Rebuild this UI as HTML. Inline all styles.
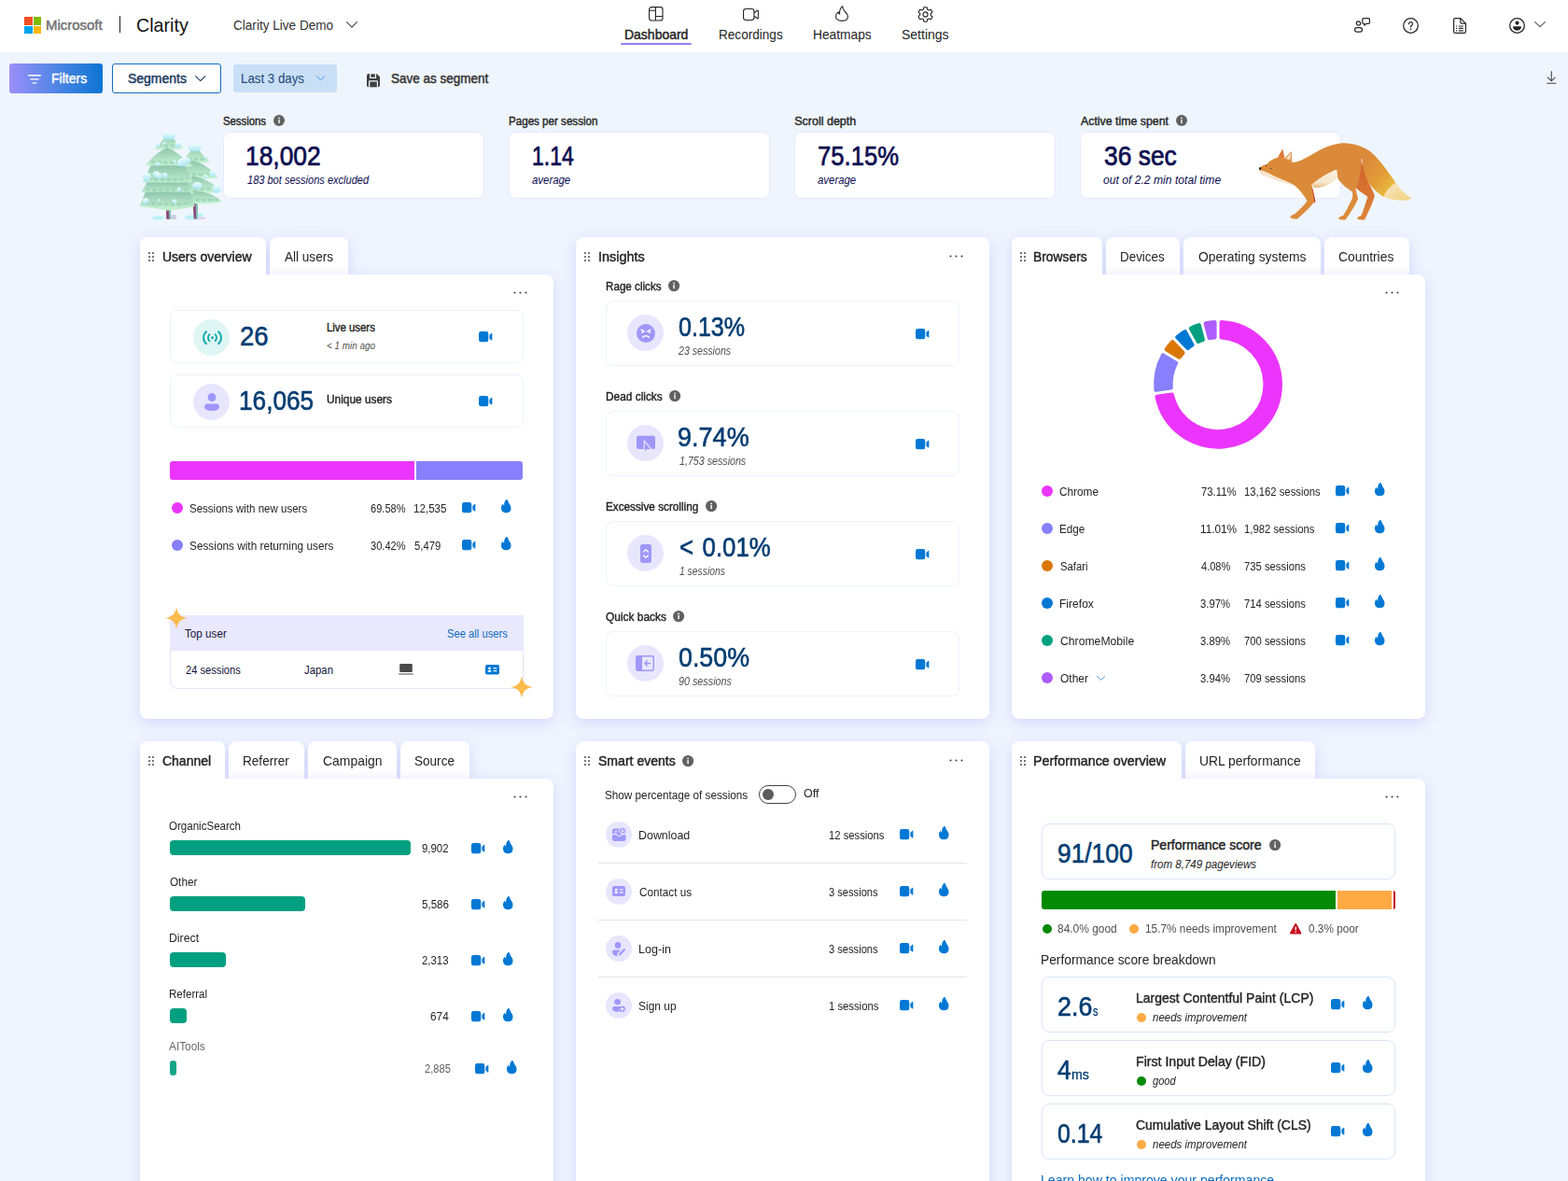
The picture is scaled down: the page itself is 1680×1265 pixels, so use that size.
<!DOCTYPE html>
<html lang="en"><head><meta charset="utf-8"><title>Clarity Live Demo - Dashboard</title>
<style>
html,body{margin:0;padding:0}
body{width:1680px;height:1265px;overflow:hidden;position:relative;background:#eff5fd;font-family:"Liberation Sans",sans-serif;color:#242424}
div,span,svg,a,h1,h2,h3,p,button,header,nav,section,ul,li{position:absolute;box-sizing:border-box;margin:0;padding:0}
.t{white-space:nowrap;transform-origin:0 0;line-height:20px;font-weight:400;text-decoration:none}
.i{overflow:visible}
header{left:0;top:0;width:1680px;height:56px;background:#fff}
.card{background:#fff;border-radius:8px;box-shadow:0 4px 16px rgba(100,100,255,.2)}
.shw{left:0;top:0;filter:drop-shadow(0 4px 8px rgba(100,100,255,.2))}
.cardb{background:#fff;border-radius:0 8px 8px 8px}
.tab{background:#fff;border-radius:8px 8px 0 0}
.tabi{background:linear-gradient(#fff 78%,#f3f3fe);border-radius:8px 8px 0 0}
.bx{border:1px solid #edf2fc;border-radius:8px;background:#fff}
.circ{border-radius:50%}
.dot{border-radius:50%}
.sep{height:1px;background:#e3e3e3}
</style></head>
<body>
<svg width="0" height="0" style="position:absolute"><defs>
<symbol id="cam" viewBox="0 0 14.600 11.400" preserveAspectRatio="none"><path fill="currentColor" d="M0 2.400A2.400 2.400 0 0 1 2.400 0h5.500a2.400 2.400 0 0 1 2.400 2.400v6.600a2.400 2.400 0 0 1-2.400 2.400H2.400A2.400 2.400 0 0 1 0 9ZM11.400 3.900l2-1.900c.5-.4 1.200-.1 1.200.5v6.400c0 .6-.7.900-1.200.5l-2-1.900Z"/></symbol>
<symbol id="flame" viewBox="0 0 10.700 14.400" preserveAspectRatio="none"><path fill="currentColor" d="M6 0c.8 0 1 .8 1.200 1.500.6 1.800 1.600 3.100 2.400 4.400.7 1.100 1.100 2.100 1.100 3.300 0 3-2.300 5.200-5.350 5.200S0 12.200 0 9.200c0-1.600.5-3 1.300-4 .3-.3.700-.2.800.2.200.6.600 1 1.100 1.100C3 4.600 3.300 2.600 4.600.9 5 .4 5.500 0 6 0Z"/></symbol>
<symbol id="info" viewBox="0 0 12 12"><circle cx="6" cy="6" r="6" fill="#616161"/><circle cx="6" cy="3.400" r=".85" fill="#fff"/><rect x="5.300" y="5" width="1.400" height="4.200" rx=".5" fill="#fff"/></symbol>
<symbol id="drag" viewBox="0 0 6 10"><g fill="#616161"><rect x="0" y="0" width="2" height="2" rx=".4"/><rect x="4" y="0" width="2" height="2" rx=".4"/><rect x="0" y="4" width="2" height="2" rx=".4"/><rect x="4" y="4" width="2" height="2" rx=".4"/><rect x="0" y="8" width="2" height="2" rx=".4"/><rect x="4" y="8" width="2" height="2" rx=".4"/></g></symbol>
<symbol id="more" viewBox="0 0 15 3"><g fill="#424242"><circle cx="1.500" cy="1.500" r="1.050"/><circle cx="7.500" cy="1.500" r="1.050"/><circle cx="13.500" cy="1.500" r="1.050"/></g></symbol>
<symbol id="chev" viewBox="0 0 12 7" preserveAspectRatio="none"><path d="M.6.700 6 6.100 11.400.700" fill="none" stroke="currentColor" stroke-width="1.100" stroke-linecap="round" stroke-linejoin="round"/></symbol>
<symbol id="spark" viewBox="0 0 24 24"><path fill="#fdba4d" d="M12 0c1 7.400 4.600 11 12 12-7.400 1-11 4.600-12 12-1-7.400-4.600-11-12-12C7.400 11 11 7.400 12 0Z"/></symbol>
</defs></svg>
<header><div style="left:26px;top:18px;width:8.5px;height:8.5px;background:#f25022"></div><div style="left:35.500px;top:18px;width:8.500px;height:8.500px;background:#7fba00"></div><div style="left:26px;top:27.500px;width:8.500px;height:8.500px;background:#00a4ef"></div><div style="left:35.500px;top:27.500px;width:8.500px;height:8.500px;background:#ffb900"></div><span class="t" style="left:49.01px;top:17px;font-size:15.3px;transform:scaleX(0.9770);color:#737373;-webkit-text-stroke:0.5px #737373;">Microsoft</span><div style="left:128px;top:17px;width:1px;height:18px;background:#1b1b1b"></div><span class="t" style="left:145.80px;top:17px;font-size:20.3px;transform:scaleX(0.9710);color:#111;">Clarity</span><span class="t" style="left:250.08px;top:16.5px;font-size:14.5px;transform:scaleX(0.9360);color:#323130;">Clarity Live Demo</span><svg class="i" style="left:371px;top:23px;width:12px;height:7px;color:#424242;"><use href="#chev"/></svg><nav style="left:0;top:0"><svg class="i" style="left:695.300px;top:7.200px;width:15.600px;height:15.600px" viewBox="0 0 16 16"><g fill="none" stroke="#242424" stroke-width="1.150"><rect x=".6" y=".6" width="14.800" height="14.800" rx="2.600"/><path d="M7.600.600v14.800M.6 4.400h7M7.600 10.800h7.800"/></g></svg><span class="t" style="left:669.46px;top:27px;font-size:14.5px;transform:scaleX(0.9640);color:#242424;-webkit-text-stroke:0.45px #242424;">Dashboard</span><div style="left:665px;top:46px;width:76px;height:1.600px;border-radius:1px;background:#8d83fa"></div><svg class="i" style="left:796px;top:9px;width:17px;height:13px" viewBox="0 0 17 13"><g fill="none" stroke="#242424" stroke-width="1.100" stroke-linejoin="round"><rect x=".55" y=".55" width="11.400" height="11.900" rx="2.600"/><path d="M12 4.800 15.400 2.300c.4-.3 1 0 1 .5v7.400c0 .5-.6.800-1 .5L12 8.200"/></g></svg><span class="t" style="left:769.78px;top:27px;font-size:14.5px;transform:scaleX(0.9370);color:#242424;">Recordings</span><svg class="i" style="left:895px;top:6px;width:14px;height:17px" viewBox="0 0 14 17"><path fill="none" stroke="#242424" stroke-width="1.100" stroke-linejoin="round" d="M7.800.600c-.3 2.300.6 3.700 2 5.200 1.600 1.700 3.600 3.300 3.600 6 0 2.900-2.600 4.600-6.300 4.600S.6 14.600.6 11.700c0-2 1-3.700 2.500-4.800.2 1.100.7 1.900 1.600 2.200C4.200 5.900 5.200 2.700 7.800.6Z"/></svg><span class="t" style="left:871.31px;top:27px;font-size:14.5px;transform:scaleX(0.9490);color:#242424;">Heatmaps</span><svg class="i" style="left:981.800px;top:5.600px;width:19px;height:19px" viewBox="0 0 20 20"><g fill="none" stroke="#242424" stroke-width="1.200" stroke-linejoin="round"><path d="M8.300 1.200h3.400l.5 2.500 1.600.9 2.400-.8 1.700 2.900-1.900 1.700v1.900l1.900 1.700-1.700 2.900-2.400-.8-1.600.9-.5 2.500H8.300l-.5-2.500-1.600-.9-2.400.8-1.700-2.900L4 9.500V8.400L2.100 6.700l1.700-2.900 2.400.8 1.600-.9Z" transform="translate(0 .6)"/><circle cx="10" cy="10" r="2.700"/></g></svg><span class="t" style="left:966.39px;top:27px;font-size:14.5px;transform:scaleX(0.9650);color:#242424;">Settings</span></nav><svg class="i" style="left:1451.200px;top:19.200px;width:17px;height:16px" viewBox="0 0 17 16"><g fill="none" stroke="#242424" stroke-width="1.200" stroke-linejoin="round"><circle cx="4.500" cy="6" r="2.200"/><rect x=".6" y="10.600" width="7.800" height="4.600" rx="2.200"/><path d="M10 .600h5.200c.7 0 1.200.5 1.200 1.200v3.400c0 .7-.5 1.200-1.200 1.200h-2.400l-2 1.800V6.400h-.8c-.7 0-1.200-.5-1.200-1.200V1.800C8.800 1.100 9.300.6 10 .6Z"/></g></svg><svg class="i" style="left:1503.100px;top:19.200px;width:17px;height:17px" viewBox="0 0 17 17"><circle cx="8.500" cy="8.500" r="7.800" fill="none" stroke="#242424" stroke-width="1.200"/><path d="M6.500 6.700c0-1.200.9-2 2-2s2 .8 2 1.900c0 1.600-2 1.700-2 3.400" fill="none" stroke="#242424" stroke-width="1.200" stroke-linecap="round"/><circle cx="8.500" cy="12.300" r=".85" fill="#242424"/></svg><svg class="i" style="left:1556.800px;top:19.200px;width:14px;height:17px" viewBox="0 0 14 17"><g fill="none" stroke="#242424" stroke-width="1.200" stroke-linejoin="round"><path d="M2.200.600h5.600l5.600 5.600v8.600c0 .9-.7 1.600-1.600 1.600H2.200c-.9 0-1.600-.7-1.600-1.600V2.200C.6 1.300 1.300.6 2.200.6Z"/><path d="M7.800.600v4c0 .9.700 1.600 1.600 1.600h4"/></g><g stroke="#242424" stroke-width="1.200"><path d="M5.800 9h5M5.800 11.400h5M5.800 13.800h5"/><path d="M3 9h1.200M3 11.400h1.200M3 13.800h1.200"/></g></svg><svg class="i" style="left:1617.200px;top:19.200px;width:17px;height:17px" viewBox="0 0 17 17"><circle cx="8.500" cy="8.500" r="7.800" fill="none" stroke="#242424" stroke-width="1.300"/><circle cx="8.500" cy="5.600" r="2.100" fill="#242424"/><path d="M4 9.200h9c0 2.800-1.900 4.600-4.500 4.600S4 12 4 9.200Z" fill="#242424"/></svg><svg class="i" style="left:1644px;top:23px;width:12px;height:6.5px;color:#555;"><use href="#chev"/></svg></header><div style="left:0;top:0"><button style="left:10px;top:68px;width:99.600px;height:32px;border:0;border-radius:3px;background:linear-gradient(90deg,#9b8ff9,#4f86e4 50%,#0b74d3)"></button><svg class="i" style="left:30px;top:79.500px;width:14px;height:10px" viewBox="0 0 14 10"><path d="M.7.700h12.600M2.900 4.900h8.200M5.200 8.900h3.600" stroke="#fff" stroke-width="1.400" stroke-linecap="round"/></svg><span class="t" style="left:55.40px;top:74px;font-size:14.5px;transform:scaleX(0.9690);color:#fff;-webkit-text-stroke:0.45px #fff;">Filters</span><button style="left:120px;top:68px;width:117px;height:32px;border:1px solid #0f6cbd;border-radius:3px;background:#fff"></button><span class="t" style="left:137.48px;top:74px;font-size:14.5px;transform:scaleX(0.9630);color:#17375e;-webkit-text-stroke:0.45px #17375e;">Segments</span><svg class="i" style="left:208.5px;top:80.5px;width:11.5px;height:6.5px;color:#17375e;"><use href="#chev"/></svg><button style="left:250px;top:69px;width:111px;height:30px;border:0;border-radius:3px;background:#c8dff6"></button><span class="t" style="left:257.50px;top:74px;font-size:14.5px;transform:scaleX(0.9170);color:#1d4777;">Last 3 days</span><svg class="i" style="left:339px;top:80.8px;width:9.2px;height:5.5px;color:#2f8ad8;"><use href="#chev"/></svg><svg class="i" style="left:393px;top:78.900px;width:14px;height:14.300px" viewBox="0 0 14 14.300"><path d="M2 0h8.600L14 3.200v9.100a2 2 0 0 1-2 2H2a2 2 0 0 1-2-2V2a2 2 0 0 1 2-2Z" fill="#404040"/><path d="M3-.2h7.100V4a1 1 0 0 1-1 1H4a1 1 0 0 1-1-1ZM2 14.500V8.200a1 1 0 0 1 1-1h8a1 1 0 0 1 1 1v6.300Z" fill="#eff5fd"/><path d="M4.300.3h4.500v3.400H4.300ZM3.300 8.500h7.500v5.800H3.300Z" fill="#404040"/></svg><span class="t" style="left:418.88px;top:74px;font-size:14.5px;transform:scaleX(0.9310);color:#323130;-webkit-text-stroke:0.45px #323130;">Save as segment</span><svg class="i" style="left:1656.900px;top:76px;width:10.500px;height:14px" viewBox="0 0 10.500 14"><path d="M5.250.3v10.400M1 6.600l4.250 4.200L9.500 6.600M.2 13.300h10.100" fill="none" stroke="#424242" stroke-width="1.100"/></svg></div><section style="left:0;top:0"><span class="t" style="left:239.18px;top:120px;font-size:12.5px;transform:scaleX(0.9050);color:#242424;-webkit-text-stroke:0.4px #242424;">Sessions</span><svg class="i" style="left:293px;top:123px;width:12px;height:12px;"><use href="#info"/></svg><div style="left:239px;top:141px;width:280px;height:72px;background:#fff;border:1px solid #e9e9fc;border-radius:8px"></div><span class="t" style="left:263.13px;top:157px;font-size:29px;transform:scaleX(0.9090);color:#0c0c50;-webkit-text-stroke:0.7px #0c0c50;">18,002</span><span class="t" style="left:265.30px;top:183px;font-size:12.5px;transform:scaleX(0.8830);color:#0c0c50;font-style:italic;">183 bot sessions excluded</span><span class="t" style="left:545.34px;top:120px;font-size:12.5px;transform:scaleX(0.9280);color:#242424;-webkit-text-stroke:0.4px #242424;">Pages per session</span><div style="left:545px;top:141px;width:280px;height:72px;background:#fff;border:1px solid #e9e9fc;border-radius:8px"></div><span class="t" style="left:570.25px;top:157px;font-size:29px;transform:scaleX(0.7930);color:#0c0c50;-webkit-text-stroke:0.7px #0c0c50;">1.14</span><span class="t" style="left:570.24px;top:183px;font-size:12.5px;transform:scaleX(0.9120);color:#0c0c50;font-style:italic;">average</span><span class="t" style="left:851.22px;top:120px;font-size:12.5px;color:#242424;-webkit-text-stroke:0.4px #242424;">Scroll depth</span><div style="left:851px;top:141px;width:280px;height:72px;background:#fff;border:1px solid #e9e9fc;border-radius:8px"></div><span class="t" style="left:875.84px;top:157px;font-size:29px;transform:scaleX(0.8850);color:#0c0c50;-webkit-text-stroke:0.7px #0c0c50;">75.15%</span><span class="t" style="left:876.24px;top:183px;font-size:12.5px;transform:scaleX(0.9120);color:#0c0c50;font-style:italic;">average</span><span class="t" style="left:1157.75px;top:120px;font-size:12.5px;transform:scaleX(0.9880);color:#242424;-webkit-text-stroke:0.4px #242424;">Active time spent</span><svg class="i" style="left:1260px;top:123px;width:12px;height:12px;"><use href="#info"/></svg><div style="left:1157px;top:141px;width:280px;height:72px;background:#fff;border:1px solid #e9e9fc;border-radius:8px"></div><span class="t" style="left:1182.73px;top:157px;font-size:29px;transform:scaleX(0.9100);color:#0c0c50;-webkit-text-stroke:0.7px #0c0c50;">36 sec</span><span class="t" style="left:1182.17px;top:183px;font-size:12.5px;transform:scaleX(0.9710);color:#0c0c50;font-style:italic;">out of 2.2 min total time</span></section>
<div style="left:0;top:0"><svg class="i" style="left:140px;top:135px;width:110px;height:110px" viewBox="0 0 1265 1265">
<defs><linearGradient id="tg" x1="0" y1="0" x2="0" y2="1"><stop offset="0" stop-color="#8fc6ae"/><stop offset=".5" stop-color="#acdec1"/><stop offset="1" stop-color="#c8f4d3"/></linearGradient>
<linearGradient id="sg" x1="0" y1="0" x2="0" y2="1"><stop offset="0" stop-color="#f2fdfe"/><stop offset="1" stop-color="#a6e6f5"/></linearGradient></defs>
<g fill="#b9f1f7"><ellipse cx="340" cy="1130" rx="75" ry="24"/><ellipse cx="780" cy="1125" rx="115" ry="30"/><ellipse cx="850" cy="1095" rx="40" ry="22"/></g><ellipse cx="875" cy="1135" rx="50" ry="14" fill="#e6cdea"/>
<path d="M765 930h62l-8 215h-40Z" fill="#8a4a7c"/><path d="M800 930h28l-8 215h-12Z" fill="#7fc8b8"/>
<g fill="url(#tg)"><path d="M790 245C850 315 925 390 975 440 885 470 700 460 620 440 680 380 740 310 790 245Z"/><path d="M760 425c120 20 245 115 315 210-120 28-375 18-475-12 40-80 100-155 160-198Z"/><path d="M760 615c140 20 285 105 358 195-110 22-315 22-498-8Z"/><path d="M760 795c140 0 295 55 370 140-125 28-330 28-480 8Z"/></g>
<g fill="none" stroke="#8ccbb2" stroke-opacity=".55" stroke-width="34" stroke-dasharray="52 26"><path d="M700 400c90 12 170 10 240 2"/><path d="M680 585c120 18 260 15 350 2"/><path d="M700 765c120 18 280 15 370 0"/><path d="M720 905c120 14 260 12 360 0"/></g>
<g fill="url(#sg)"><ellipse cx="790" cy="266" rx="84" ry="48"/><circle cx="920" cy="382" r="24"/><circle cx="1010" cy="585" r="38"/><circle cx="925" cy="622" r="26"/><circle cx="1062" cy="772" r="52"/><ellipse cx="820" cy="735" rx="58" ry="44"/></g>
<path d="M437 1020h60l-6 128h-52Z" fill="#8a4a7c"/><path d="M470 1020h28l-6 128h-16Z" fill="#7fc8b8"/><ellipse cx="530" cy="1120" rx="36" ry="30" fill="#c8d0e4"/>
<g fill="url(#tg)"><path d="M470 95c50 60 132 132 172 175-80 30-262 30-352 15 50-58 120-128 180-190Z"/><path d="M450 268c90 20 172 112 322 227-120 15-442 5-587-15 65-80 145-162 265-212Z"/><path d="M250 485h412l110 205c-170 10-272 62-352 52-100-20-192-30-272-52Z"/><path d="M200 695h502l80 135c-180 22-482 12-647-15Z"/><path d="M180 815h552l60 175c-90 10-192 52-362 52-130-40-232-40-317-57Z"/></g>
<g fill="none" stroke="#8ccbb2" stroke-opacity=".55" stroke-width="34" stroke-dasharray="52 26"><path d="M330 235c90 12 190 10 270 0"/><path d="M250 440c130 16 340 14 460 2"/><path d="M210 645c130 22 360 22 500-2"/><path d="M190 780c150 18 400 18 540 0"/><path d="M180 945c150 26 400 28 560 0"/></g>
<g fill="url(#sg)"><ellipse cx="470" cy="120" rx="84" ry="48"/><circle cx="340" cy="230" r="28"/><circle cx="585" cy="226" r="38"/><ellipse cx="655" cy="438" rx="86" ry="52" transform="rotate(-22 655 438)"/><circle cx="200" cy="625" r="50"/><circle cx="312" cy="592" r="38"/><circle cx="420" cy="608" r="34"/><circle cx="345" cy="612" r="36"/><circle cx="335" cy="470" r="24"/><circle cx="185" cy="925" r="38"/><circle cx="598" cy="780" r="24"/><circle cx="542" cy="930" r="28"/><circle cx="540" cy="436" r="18"/><circle cx="415" cy="212" r="16"/><circle cx="348" cy="915" r="16"/></g>
</svg><svg class="i" style="left:1340px;top:140px;width:180px;height:105px" viewBox="0 0 1680 980">
<defs><linearGradient id="ft" gradientUnits="userSpaceOnUse" x1="1150" y1="300" x2="1450" y2="560"><stop offset="0" stop-color="#dc8a3a"/><stop offset=".55" stop-color="#e29c38"/><stop offset="1" stop-color="#e9c03e"/></linearGradient>
<linearGradient id="fw" x1="0" y1="0" x2="1" y2="1"><stop offset="0" stop-color="#f9e6c6"/><stop offset="1" stop-color="#f1d27c"/></linearGradient>
<linearGradient id="fb" x1="0" y1="0" x2="0" y2="1"><stop offset="0" stop-color="#f9efdf"/><stop offset=".7" stop-color="#f6e6cc"/><stop offset="1" stop-color="#e9b780"/></linearGradient>
<linearGradient id="fl" x1="0" y1="0" x2="0" y2="1"><stop offset="0" stop-color="#d2602b"/><stop offset=".6" stop-color="#da7632"/><stop offset="1" stop-color="#dd8537"/></linearGradient></defs>
<path d="M1110 165C1210 190 1300 300 1450 520L1330 660C1260 625 1180 540 1120 430Z" fill="url(#ft)"/>
<path d="M1450 520C1500 590 1560 650 1612 680 1540 712 1420 700 1330 660 1350 600 1400 550 1450 520Z" fill="url(#fw)"/>
<path d="M1105 290C1125 400 1160 490 1200 560 1215 590 1230 620 1240 650 1220 720 1180 810 1140 888 1120 895 1075 892 1065 878 1068 865 1085 855 1105 850 1125 800 1150 730 1170 660 1140 640 1090 610 1050 570 1080 500 1100 400 1105 290Z" fill="url(#fl)"/>
<path d="M85 378C95 355 130 345 160 335 190 300 230 275 270 268L340 272 412 315C470 320 520 290 600 245 700 185 790 140 900 126 1010 118 1110 150 1200 215 1150 245 1115 268 1105 290 1108 400 1085 500 1050 572 1000 580 900 540 870 470 865 440 862 410 860 390 780 420 680 480 610 540L640 700C640 720 560 800 470 880 440 885 410 880 395 865 400 850 420 835 440 832 490 790 540 740 565 700 530 640 490 590 440 545 330 510 200 470 120 440 95 420 85 400 85 378Z" fill="#db8a3a"/>
<path d="M870 470C900 540 1000 600 1015 610 1025 640 1020 670 1010 690 980 750 950 810 925 850 900 855 880 865 878 878 885 892 930 895 950 888 1000 820 1050 740 1075 680 1060 640 1055 600 1050 572Z" fill="#dc8b3b"/>
<path d="M270 268 320 180l20 92Z" fill="#e0793a"/><path d="M340 275 408 205l4 110Z" fill="#dd8d3e"/><path d="M352 280 402 222l-6 70Z" fill="#f6e2c4"/>
<path d="M90 395c40 5 90 25 140 55 70 30 150 60 210 95-90-15-240-65-320-105-20-15-28-30-30-45Z" fill="#f7e6cf"/>
<path d="M610 540c70-60 170-120 250-150 2 30 5 55 10 80-70 70-170 110-240 100Z" fill="url(#fb)"/>
<path d="M618 575c12 40 22 90 30 135l-10 15c-6-50-16-100-28-150Z" fill="#c8412a"/>
<circle cx="95" cy="377" r="11" fill="#111"/><circle cx="155" cy="348" r="5.500" fill="#222"/><ellipse cx="205" cy="378" rx="8" ry="4.500" fill="#222"/>
</svg></div>
<section style="left:0;top:0"><div class="shw"><div class="cardb" style="left:150px;top:294px;width:443px;height:476px"></div><div class="tab" style="left:150px;top:254px;width:135px;height:40px"></div><div class="tabi" style="left:289px;top:254px;width:84px;height:40px"></div></div><svg class="i" style="left:159px;top:270px;width:6px;height:10px;"><use href="#drag"/></svg><span class="t" style="left:173.89px;top:265px;font-size:14.5px;transform:scaleX(0.9640);color:#242424;-webkit-text-stroke:0.45px #242424;">Users overview</span><span class="t" style="left:305.43px;top:265px;font-size:14.5px;transform:scaleX(0.9350);color:#242424;">All users</span><svg class="i" style="left:550.1px;top:311.6px;width:15px;height:3px;"><use href="#more"/></svg><div class="bx" style="left:182px;top:332px;width:378.500px;height:57px"></div><div class="circ" style="left:207px;top:341.500px;width:39px;height:39px;background:#dff6f4"></div><svg class="i" style="left:216.500px;top:353.700px;width:21px;height:15.400px" viewBox="0 0 21 15.400"><g fill="none" stroke="#10a9a9" stroke-width="1.900" stroke-linecap="round"><path d="M4 1.200C.1 4.700.1 10.700 4 14.200M17 1.200c3.900 3.500 3.900 9.500 0 13M7.400 4.200c-1.900 1.900-1.900 5.100 0 7M13.600 4.200c1.900 1.900 1.900 5.100 0 7"/></g><circle cx="10.500" cy="7.700" r="1.500" fill="#10a9a9"/></svg><span class="t" style="left:257.09px;top:350px;font-size:29px;transform:scaleX(0.9480);color:#023c72;-webkit-text-stroke:0.6px #023c72;">26</span><span class="t" style="left:349.89px;top:341px;font-size:12.5px;transform:scaleX(0.9100);color:#242424;-webkit-text-stroke:0.4px #242424;">Live users</span><span class="t" style="left:349.91px;top:360px;font-size:10.5px;transform:scaleX(0.9440);color:#505050;font-style:italic;">&lt; 1 min ago</span><svg class="i" style="left:513.4px;top:355px;width:14.6px;height:11.4px;color:#0078d4;"><use href="#cam"/></svg><div class="bx" style="left:182px;top:401px;width:378.500px;height:57px"></div><div class="circ" style="left:207px;top:410.500px;width:39px;height:39px;background:#e8e6fd"></div><svg class="i" style="left:218.500px;top:421px;width:16px;height:19px" viewBox="0 0 16 19"><circle cx="8" cy="4.600" r="4.500" fill="#9f97fa"/><path d="M3.200 11.500h9.600c1.800 0 3.200 1.400 3.200 3.200 0 2.600-3 4.300-8 4.300s-8-1.700-8-4.300c0-1.800 1.400-3.200 3.200-3.200Z" fill="#9f97fa"/></svg><span class="t" style="left:255.74px;top:419px;font-size:29px;transform:scaleX(0.9030);color:#023c72;-webkit-text-stroke:0.6px #023c72;">16,065</span><span class="t" style="left:349.89px;top:418px;font-size:12.5px;transform:scaleX(0.9490);color:#242424;-webkit-text-stroke:0.4px #242424;">Unique users</span><svg class="i" style="left:513.4px;top:424px;width:14.6px;height:11.4px;color:#0078d4;"><use href="#cam"/></svg><div style="left:182px;top:494px;width:262px;height:20px;background:#eb35fc;border-radius:3px 0 0 3px"></div><div style="left:446px;top:494px;width:114px;height:20px;background:#877ffc;border-radius:0 3px 3px 0"></div><div class="dot" style="left:184px;top:538px;width:12px;height:12px;background:#eb35fc"></div><span class="t" style="left:203.35px;top:535px;font-size:12.5px;transform:scaleX(0.9220);color:#242424;">Sessions with new users</span><span class="t" style="left:397.38px;top:535px;font-size:12.5px;transform:scaleX(0.8850);color:#242424;">69.58%</span><span class="t" style="left:443.48px;top:535px;font-size:12.5px;transform:scaleX(0.9280);color:#242424;">12,535</span><svg class="i" style="left:495.1px;top:537.7px;width:14.6px;height:11.4px;color:#0078d4;"><use href="#cam"/></svg><svg class="i" style="left:537.2px;top:534.9px;width:10.7px;height:14.4px;color:#0078d4;"><use href="#flame"/></svg><div class="dot" style="left:184px;top:578px;width:12px;height:12px;background:#877ffc"></div><span class="t" style="left:202.76px;top:575px;font-size:12.5px;transform:scaleX(0.9450);color:#242424;">Sessions with returning users</span><span class="t" style="left:397.37px;top:575px;font-size:12.5px;transform:scaleX(0.8850);color:#242424;">30.42%</span><span class="t" style="left:444.18px;top:575px;font-size:12.5px;transform:scaleX(0.9020);color:#242424;">5,479</span><svg class="i" style="left:495.1px;top:577.7px;width:14.6px;height:11.4px;color:#0078d4;"><use href="#cam"/></svg><svg class="i" style="left:537.2px;top:574.9px;width:10.7px;height:14.4px;color:#0078d4;"><use href="#flame"/></svg><div style="left:182px;top:659px;width:378.500px;height:78.500px;border:1px solid #e3e2fb;border-radius:0 0 8px 8px;background:#fff"></div><div style="left:182px;top:659px;width:378.500px;height:38px;background:#e9e8fd;border-radius:0 3px 0 0"></div><span class="t" style="left:198.49px;top:669px;font-size:12.5px;transform:scaleX(0.9360);color:#14143c;">Top user</span><a class="t" style="left:478.73px;top:669px;font-size:12.5px;transform:scaleX(0.8980);color:#0f6cbd;">See all users</a><span class="t" style="left:198.79px;top:708px;font-size:12.5px;transform:scaleX(0.8910);color:#14143c;">24 sessions</span><span class="t" style="left:326.28px;top:708px;font-size:12.5px;transform:scaleX(0.9090);color:#14143c;">Japan</span><svg class="i" style="left:426.800px;top:710.800px;width:16px;height:11.500px" viewBox="0 0 16 11.500"><rect x="1.200" y="0" width="13.600" height="9" rx="1.300" fill="#4a4a4a"/><rect x="0" y="10.400" width="16" height="1.100" rx=".5" fill="#4a4a4a"/></svg><svg class="i" style="left:520px;top:712px;width:15px;height:10.500px" viewBox="0 0 15 10.500"><rect width="15" height="10.500" rx="1.800" fill="#0078d4"/><circle cx="4.500" cy="4" r="1.400" fill="#fff"/><rect x="2.600" y="6" width="3.800" height="1.800" rx=".9" fill="#fff"/><rect x="8.300" y="3.200" width="4.200" height="1.200" rx=".6" fill="#fff"/><rect x="8.300" y="6" width="4.200" height="1.200" rx=".6" fill="#fff"/></svg><svg class="i" style="left:177.3px;top:650.3px;width:24px;height:24px;"><use href="#spark"/></svg><svg class="i" style="left:547.2px;top:724.3px;width:24px;height:24px;"><use href="#spark"/></svg></section><section style="left:0;top:0"><div class="card" style="left:617px;top:254px;width:443px;height:516px"></div><svg class="i" style="left:626px;top:270px;width:6px;height:10px;"><use href="#drag"/></svg><span class="t" style="left:640.58px;top:265px;font-size:14.5px;transform:scaleX(0.9970);color:#242424;-webkit-text-stroke:0.45px #242424;">Insights</span><svg class="i" style="left:1016.6px;top:272.6px;width:15px;height:3px;"><use href="#more"/></svg><span class="t" style="left:648.87px;top:297px;font-size:12.5px;transform:scaleX(0.9320);color:#242424;-webkit-text-stroke:0.4px #242424;">Rage clicks</span><svg class="i" style="left:716px;top:300.2px;width:12.2px;height:12.2px;"><use href="#info"/></svg><div class="bx" style="left:649px;top:322px;width:379px;height:70px"></div><div class="circ" style="left:672px;top:337.3px;width:39px;height:39px;background:#e8e6fd"></div><svg class="i" style="left:681.500px;top:346.7px;width:20px;height:20px" viewBox="0 0 20 20"><circle cx="10" cy="10" r="10" fill="#9f97fa"/><g fill="none" stroke="#fff" stroke-width="1.400" stroke-linecap="round"><path d="M5 6.200 8.200 8 5.600 9.200M15 6.200 11.800 8l2.600 1.200M6.600 14.200c1.800-1.900 5-1.900 6.800 0"/></g></svg><span class="t" style="left:726.88px;top:340px;font-size:29px;transform:scaleX(0.8650);color:#023c72;-webkit-text-stroke:0.6px #023c72;">0.13%</span><span class="t" style="left:727.42px;top:366px;font-size:12.5px;transform:scaleX(0.8500);color:#505050;font-style:italic;">23 sessions</span><svg class="i" style="left:981.4px;top:352px;width:14.6px;height:11.4px;color:#0078d4;"><use href="#cam"/></svg><span class="t" style="left:648.88px;top:415px;font-size:12.5px;transform:scaleX(0.9500);color:#242424;-webkit-text-stroke:0.4px #242424;">Dead clicks</span><svg class="i" style="left:717px;top:418.2px;width:12.2px;height:12.2px;"><use href="#info"/></svg><div class="bx" style="left:649px;top:440px;width:379px;height:70px"></div><div class="circ" style="left:672px;top:455.3px;width:39px;height:39px;background:#e8e6fd"></div><svg class="i" style="left:681.500px;top:465.1px;width:20px;height:20px" viewBox="0 0 20 20"><path d="M2 1.700h16c1.100 0 2 .9 2 2v10.200c0 1.100-.9 2-2 2H2c-1.100 0-2-.9-2-2V3.700c0-1.100.9-2 2-2Z" fill="#9f97fa"/><path d="M8.200 7.200v12.600l3.300-3.200h4.700Z" fill="#9f97fa" stroke="#e8e6fd" stroke-width="1.200" stroke-linejoin="round"/></svg><span class="t" style="left:726.06px;top:458px;font-size:29px;transform:scaleX(0.9330);color:#023c72;-webkit-text-stroke:0.6px #023c72;">9.74%</span><span class="t" style="left:728.09px;top:484px;font-size:12.5px;transform:scaleX(0.8540);color:#505050;font-style:italic;">1,753 sessions</span><svg class="i" style="left:981.4px;top:470px;width:14.6px;height:11.4px;color:#0078d4;"><use href="#cam"/></svg><span class="t" style="left:648.95px;top:533px;font-size:12.5px;transform:scaleX(0.9400);color:#242424;-webkit-text-stroke:0.4px #242424;">Excessive scrolling</span><svg class="i" style="left:756px;top:536.2px;width:12.2px;height:12.2px;"><use href="#info"/></svg><div class="bx" style="left:649px;top:558px;width:379px;height:70px"></div><div class="circ" style="left:672px;top:573.3px;width:39px;height:39px;background:#e8e6fd"></div><svg class="i" style="left:685.500px;top:582.7px;width:12px;height:20px" viewBox="0 0 12 20"><rect width="12" height="20" rx="2.400" fill="#9f97fa"/><path d="M3.600 8 6 5.600 8.400 8M3.600 12 6 14.400 8.400 12" fill="none" stroke="#fff" stroke-width="1.300" stroke-linecap="round" stroke-linejoin="round"/></svg><span class="t" style="left:728.34px;top:576px;font-size:29px;transform:scaleX(0.8900);color:#023c72;-webkit-text-stroke:0.6px #023c72;word-spacing:2.6px;">&lt; 0.01%</span><span class="t" style="left:728.27px;top:602px;font-size:12.5px;transform:scaleX(0.8270);color:#505050;font-style:italic;">1 sessions</span><svg class="i" style="left:981.4px;top:588px;width:14.6px;height:11.4px;color:#0078d4;"><use href="#cam"/></svg><span class="t" style="left:649.06px;top:651px;font-size:12.5px;transform:scaleX(0.9540);color:#242424;-webkit-text-stroke:0.4px #242424;">Quick backs</span><svg class="i" style="left:721px;top:654.2px;width:12.2px;height:12.2px;"><use href="#info"/></svg><div class="bx" style="left:649px;top:676px;width:379px;height:70px"></div><div class="circ" style="left:672px;top:691.3px;width:39px;height:39px;background:#e8e6fd"></div><svg class="i" style="left:681px;top:702.2px;width:20px;height:17px" viewBox="0 0 20 17"><rect width="20" height="17" rx="2.400" fill="#9f97fa"/><rect x="7" y="1.500" width="11.500" height="14" rx="1.200" fill="#e8e6fd"/><path d="M15.500 8.500h-5.500M12.300 6 9.800 8.500l2.500 2.500" fill="none" stroke="#9f97fa" stroke-width="1.400" stroke-linecap="round" stroke-linejoin="round"/></svg><span class="t" style="left:726.83px;top:694px;font-size:29px;transform:scaleX(0.9250);color:#023c72;-webkit-text-stroke:0.6px #023c72;">0.50%</span><span class="t" style="left:726.81px;top:720px;font-size:12.5px;transform:scaleX(0.8620);color:#505050;font-style:italic;">90 sessions</span><svg class="i" style="left:981.4px;top:706px;width:14.6px;height:11.4px;color:#0078d4;"><use href="#cam"/></svg></section><section style="left:0;top:0"><div class="shw"><div class="cardb" style="left:1084px;top:294px;width:443px;height:476px"></div><div class="tab" style="left:1084px;top:254px;width:97px;height:40px"></div><div class="tabi" style="left:1185px;top:254px;width:79px;height:40px"></div><div class="tabi" style="left:1268px;top:254px;width:147px;height:40px"></div><div class="tabi" style="left:1419px;top:254px;width:91px;height:40px"></div></div><svg class="i" style="left:1093px;top:270px;width:6px;height:10px;"><use href="#drag"/></svg><span class="t" style="left:1107.41px;top:265px;font-size:14.5px;transform:scaleX(0.9560);color:#242424;-webkit-text-stroke:0.45px #242424;">Browsers</span><span class="t" style="left:1199.90px;top:265px;font-size:14.5px;transform:scaleX(0.9240);color:#242424;">Devices</span><span class="t" style="left:1283.65px;top:265px;font-size:14.5px;transform:scaleX(0.9550);color:#242424;">Operating systems</span><span class="t" style="left:1434.49px;top:265px;font-size:14.5px;transform:scaleX(0.9560);color:#242424;">Countries</span><svg class="i" style="left:1484.1px;top:311.6px;width:15px;height:3px;"><use href="#more"/></svg><svg class="i" style="left:0;top:0;width:1680px;height:1265px" viewBox="0 0 1680 1265"><path d="M1308.80 345.21A66.6 66.6 0 1 1 1239.79 425.01L1255.56 422.71A50.7 50.7 0 1 0 1308.80 361.14Z" fill="#eb35fc" stroke="#eb35fc" stroke-width="4.6" stroke-linejoin="round"/><path d="M1238.71 417.59A66.6 66.6 0 0 1 1246.12 380.67L1259.78 388.87A50.7 50.7 0 0 0 1254.48 415.29Z" fill="#877ffc" stroke="#877ffc" stroke-width="4.6" stroke-linejoin="round"/><path d="M1249.98 374.24A66.6 66.6 0 0 1 1256.16 366.47L1267.23 377.93A50.7 50.7 0 0 0 1263.64 382.44Z" fill="#d97706" stroke="#d97706" stroke-width="4.6" stroke-linejoin="round"/><path d="M1261.56 361.26A66.6 66.6 0 0 1 1269.53 355.36L1277.26 369.30A50.7 50.7 0 0 0 1272.62 372.72Z" fill="#0078d4" stroke="#0078d4" stroke-width="4.6" stroke-linejoin="round"/><path d="M1276.09 351.72A66.6 66.6 0 0 1 1284.60 348.32L1288.63 363.73A50.7 50.7 0 0 0 1283.82 365.66Z" fill="#02a080" stroke="#02a080" stroke-width="4.6" stroke-linejoin="round"/><path d="M1291.86 346.42A66.6 66.6 0 0 1 1301.30 345.21L1301.30 361.14A50.7 50.7 0 0 0 1295.89 361.83Z" fill="#ae5cfc" stroke="#ae5cfc" stroke-width="4.6" stroke-linejoin="round"/></svg><div class="dot" style="left:1116px;top:520.15px;width:12.3px;height:12.3px;background:#eb35fc"></div><span class="t" style="left:1135.48px;top:517px;font-size:12.5px;transform:scaleX(0.9450);color:#242424;">Chrome</span><span class="t" style="left:1286.59px;top:517px;font-size:12.5px;transform:scaleX(0.9060);color:#242424;">73.11%</span><span class="t" style="left:1332.61px;top:517px;font-size:12.5px;transform:scaleX(0.9040);color:#242424;">13,162 sessions</span><svg class="i" style="left:1431.4px;top:519.5px;width:14.6px;height:11.4px;color:#0078d4;"><use href="#cam"/></svg><svg class="i" style="left:1473px;top:516.7px;width:10.7px;height:14.4px;color:#0078d4;"><use href="#flame"/></svg><div class="dot" style="left:1116px;top:560.15px;width:12.3px;height:12.3px;background:#877ffc"></div><span class="t" style="left:1134.88px;top:557px;font-size:12.5px;transform:scaleX(0.9380);color:#242424;">Edge</span><span class="t" style="left:1285.64px;top:557px;font-size:12.5px;transform:scaleX(0.9430);color:#242424;">11.01%</span><span class="t" style="left:1332.82px;top:557px;font-size:12.5px;transform:scaleX(0.9050);color:#242424;">1,982 sessions</span><svg class="i" style="left:1431.4px;top:559.5px;width:14.6px;height:11.4px;color:#0078d4;"><use href="#cam"/></svg><svg class="i" style="left:1473px;top:556.7px;width:10.7px;height:14.4px;color:#0078d4;"><use href="#flame"/></svg><div class="dot" style="left:1116px;top:600.15px;width:12.3px;height:12.3px;background:#d97706"></div><span class="t" style="left:1135.51px;top:597px;font-size:12.5px;transform:scaleX(0.9040);color:#242424;">Safari</span><span class="t" style="left:1286.92px;top:597px;font-size:12.5px;transform:scaleX(0.8840);color:#242424;">4.08%</span><span class="t" style="left:1333.23px;top:597px;font-size:12.5px;transform:scaleX(0.9020);color:#242424;">735 sessions</span><svg class="i" style="left:1431.4px;top:599.5px;width:14.6px;height:11.4px;color:#0078d4;"><use href="#cam"/></svg><svg class="i" style="left:1473px;top:596.7px;width:10.7px;height:14.4px;color:#0078d4;"><use href="#flame"/></svg><div class="dot" style="left:1116px;top:640.15px;width:12.3px;height:12.3px;background:#0078d4"></div><span class="t" style="left:1134.53px;top:637px;font-size:12.5px;transform:scaleX(0.9650);color:#242424;">Firefox</span><span class="t" style="left:1286.33px;top:637px;font-size:12.5px;transform:scaleX(0.9010);color:#242424;">3.97%</span><span class="t" style="left:1333.23px;top:637px;font-size:12.5px;transform:scaleX(0.9020);color:#242424;">714 sessions</span><svg class="i" style="left:1431.4px;top:639.5px;width:14.6px;height:11.4px;color:#0078d4;"><use href="#cam"/></svg><svg class="i" style="left:1473px;top:636.7px;width:10.7px;height:14.4px;color:#0078d4;"><use href="#flame"/></svg><div class="dot" style="left:1116px;top:680.15px;width:12.3px;height:12.3px;background:#02a080"></div><span class="t" style="left:1135.53px;top:677px;font-size:12.5px;transform:scaleX(0.9760);color:#242424;">ChromeMobile</span><span class="t" style="left:1286.33px;top:677px;font-size:12.5px;transform:scaleX(0.9010);color:#242424;">3.89%</span><span class="t" style="left:1333.23px;top:677px;font-size:12.5px;transform:scaleX(0.9020);color:#242424;">700 sessions</span><svg class="i" style="left:1431.4px;top:679.5px;width:14.6px;height:11.4px;color:#0078d4;"><use href="#cam"/></svg><svg class="i" style="left:1473px;top:676.7px;width:10.7px;height:14.4px;color:#0078d4;"><use href="#flame"/></svg><div class="dot" style="left:1116px;top:720.15px;width:12.3px;height:12.3px;background:#ae5cfc"></div><span class="t" style="left:1135.59px;top:717px;font-size:12.5px;transform:scaleX(0.9600);color:#242424;">Other</span><span class="t" style="left:1286.33px;top:717px;font-size:12.5px;transform:scaleX(0.9010);color:#242424;">3.94%</span><span class="t" style="left:1333.23px;top:717px;font-size:12.5px;transform:scaleX(0.9020);color:#242424;">709 sessions</span><svg class="i" style="left:1175px;top:723.7px;width:9.3px;height:5px;color:#2b7fd9;"><use href="#chev"/></svg></section>
<section style="left:0;top:0"><div class="shw"><div class="cardb" style="left:150px;top:834px;width:443px;height:466px"></div><div class="tab" style="left:150px;top:794px;width:91px;height:40px"></div><div class="tabi" style="left:245px;top:794px;width:81px;height:40px"></div><div class="tabi" style="left:330px;top:794px;width:95px;height:40px"></div><div class="tabi" style="left:429px;top:794px;width:74px;height:40px"></div></div><svg class="i" style="left:159px;top:810px;width:6px;height:10px;"><use href="#drag"/></svg><span class="t" style="left:173.79px;top:805px;font-size:14.5px;transform:scaleX(0.9640);color:#242424;-webkit-text-stroke:0.45px #242424;">Channel</span><span class="t" style="left:260.40px;top:805px;font-size:14.5px;transform:scaleX(0.9370);color:#242424;">Referrer</span><span class="t" style="left:345.69px;top:805px;font-size:14.5px;transform:scaleX(0.9610);color:#242424;">Campaign</span><span class="t" style="left:444.09px;top:805px;font-size:14.5px;transform:scaleX(0.9350);color:#242424;">Source</span><svg class="i" style="left:550.1px;top:851.6px;width:15px;height:3px;"><use href="#more"/></svg><span class="t" style="left:181.48px;top:875px;font-size:12.5px;transform:scaleX(0.9240);color:#242424;">OrganicSearch</span><div style="left:182px;top:900px;width:258px;height:16px;border-radius:4px;background:#02a080"></div><span class="t" style="left:452.16px;top:899px;font-size:12.5px;transform:scaleX(0.9120);color:#242424;">9,902</span><svg class="i" style="left:505.4px;top:902.8px;width:14.6px;height:11.4px;color:#0078d4;"><use href="#cam"/></svg><svg class="i" style="left:538.9px;top:900px;width:10.7px;height:14.4px;color:#0078d4;"><use href="#flame"/></svg><span class="t" style="left:181.52px;top:935px;font-size:12.5px;transform:scaleX(0.9380);color:#242424;">Other</span><div style="left:182px;top:960px;width:145px;height:16px;border-radius:4px;background:#02a080"></div><span class="t" style="left:451.75px;top:959px;font-size:12.5px;transform:scaleX(0.9260);color:#242424;">5,586</span><svg class="i" style="left:505.4px;top:962.8px;width:14.6px;height:11.4px;color:#0078d4;"><use href="#cam"/></svg><svg class="i" style="left:538.9px;top:960px;width:10.7px;height:14.4px;color:#0078d4;"><use href="#flame"/></svg><span class="t" style="left:180.90px;top:995px;font-size:12.5px;transform:scaleX(0.9820);color:#242424;">Direct</span><div style="left:182px;top:1020px;width:60px;height:16px;border-radius:4px;background:#02a080"></div><span class="t" style="left:452.19px;top:1019px;font-size:12.5px;transform:scaleX(0.9110);color:#242424;">2,313</span><svg class="i" style="left:505.4px;top:1022.8px;width:14.6px;height:11.4px;color:#0078d4;"><use href="#cam"/></svg><svg class="i" style="left:538.9px;top:1020px;width:10.7px;height:14.4px;color:#0078d4;"><use href="#flame"/></svg><span class="t" style="left:180.79px;top:1055px;font-size:12.5px;transform:scaleX(0.9240);color:#242424;">Referral</span><div style="left:182px;top:1080px;width:18px;height:16px;border-radius:4px;background:#02a080"></div><span class="t" style="left:460.64px;top:1079px;font-size:12.5px;transform:scaleX(0.9440);color:#242424;">674</span><svg class="i" style="left:505.4px;top:1082.8px;width:14.6px;height:11.4px;color:#0078d4;"><use href="#cam"/></svg><svg class="i" style="left:538.9px;top:1080px;width:10.7px;height:14.4px;color:#0078d4;"><use href="#flame"/></svg><span class="t" style="left:181.46px;top:1111px;font-size:12.5px;transform:scaleX(0.9450);color:#686868;">AITools</span><div style="left:182px;top:1136px;width:6.600px;height:16px;border-radius:3.300px;background:#14a586"></div><span class="t" style="left:455.18px;top:1135px;font-size:12.5px;transform:scaleX(0.8900);color:#5e5e5e;">2,885</span><svg class="i" style="left:508.8px;top:1138.8px;width:14.6px;height:11.4px;color:#0078d4;"><use href="#cam"/></svg><svg class="i" style="left:542.8px;top:1136px;width:10.7px;height:14.4px;color:#0078d4;"><use href="#flame"/></svg></section><section style="left:0;top:0"><div class="card" style="left:617px;top:794px;width:443px;height:500px"></div><svg class="i" style="left:626px;top:810px;width:6px;height:10px;"><use href="#drag"/></svg><span class="t" style="left:641.17px;top:805px;font-size:14.5px;transform:scaleX(0.9690);color:#242424;-webkit-text-stroke:0.45px #242424;">Smart events</span><svg class="i" style="left:731px;top:809px;width:12.2px;height:12.2px;"><use href="#info"/></svg><svg class="i" style="left:1016.6px;top:812.6px;width:15px;height:3px;"><use href="#more"/></svg><span class="t" style="left:647.95px;top:842px;font-size:12.5px;transform:scaleX(0.9380);color:#242424;">Show percentage of sessions</span><div style="left:813px;top:841px;width:40px;height:20px;border:1px solid #424242;border-radius:10px;background:#fff"></div><div class="circ" style="left:817px;top:845px;width:12px;height:12px;background:#5c5c5c"></div><span class="t" style="left:860.94px;top:840px;font-size:12.5px;color:#242424;">Off</span><div class="circ" style="left:649px;top:879.8px;width:28px;height:28px;background:#e8e6fd"></div><svg class="i" style="left:656px;top:886.3px;width:15px;height:15px" viewBox="0 0 15 15"><path d="M2.200 1.500h5.300v4.300h5.600l1.400.1v6.900c0 1.200-1 2.200-2.200 2.200H2.200C1 15 0 14 0 12.800V3.700C0 2.500 1 1.500 2.200 1.500Z" fill="#9f97fa"/><circle cx="11" cy="3.500" r="3.500" fill="#9f97fa" stroke="#e8e6fd" stroke-width="1"/><path d="M11 1.600v3.200M9.600 3.700 11 5.100l1.400-1.400" stroke="#fff" stroke-width=".9" fill="none" stroke-linecap="round"/><path d="M0 7.600h4.800c.3 1.200 1.300 2 2.700 2s2.400-.8 2.700-2H15" fill="none" stroke="#e8e6fd" stroke-width="1.100"/><path d="M2 4.200h4M2 6h3" stroke="#e8e6fd" stroke-width=".9"/></svg><span class="t" style="left:684.03px;top:885px;font-size:12.5px;transform:scaleX(0.9940);color:#242424;">Download</span><span class="t" style="left:888.22px;top:885px;font-size:12.5px;transform:scaleX(0.9010);color:#242424;">12 sessions</span><svg class="i" style="left:964.3px;top:888px;width:14.6px;height:11.4px;color:#0078d4;"><use href="#cam"/></svg><svg class="i" style="left:1006px;top:885.2px;width:10.7px;height:14.4px;color:#0078d4;"><use href="#flame"/></svg><div class="sep" style="left:641px;top:924px;width:395px"></div><div class="circ" style="left:649px;top:940.8px;width:28px;height:28px;background:#e8e6fd"></div><svg class="i" style="left:656px;top:949.3px;width:14px;height:11px" viewBox="0 0 15 11" preserveAspectRatio="none"><rect width="15" height="11" rx="2" fill="#9f97fa"/><circle cx="4.500" cy="4.200" r="1.400" fill="#fff"/><rect x="2.600" y="6.300" width="3.800" height="1.800" rx=".9" fill="#fff"/><rect x="8.300" y="3.400" width="4.200" height="1.200" rx=".6" fill="#fff"/><rect x="8.300" y="6.300" width="4.200" height="1.200" rx=".6" fill="#fff"/></svg><span class="t" style="left:684.66px;top:946px;font-size:12.5px;transform:scaleX(0.9380);color:#242424;">Contact us</span><span class="t" style="left:888.38px;top:946px;font-size:12.5px;transform:scaleX(0.8910);color:#242424;">3 sessions</span><svg class="i" style="left:964.3px;top:949px;width:14.6px;height:11.4px;color:#0078d4;"><use href="#cam"/></svg><svg class="i" style="left:1006px;top:946.2px;width:10.7px;height:14.4px;color:#0078d4;"><use href="#flame"/></svg><div class="sep" style="left:641px;top:985px;width:395px"></div><div class="circ" style="left:649px;top:1001.8px;width:28px;height:28px;background:#e8e6fd"></div><svg class="i" style="left:656px;top:1008.5px;width:14px;height:15px" viewBox="0 0 15 16" preserveAspectRatio="none"><circle cx="6.500" cy="3.600" r="3.600" fill="#9f97fa"/><path d="M2.400 9h7.200l-3.800 4 .2 3C2.600 15.800 0 14.200 0 11.400 0 10 1 9 2.400 9Z" fill="#9f97fa"/><path d="M7.500 15.500 8 13l5-5.200c.5-.5 1.300-.5 1.700 0 .4.500.4 1.200 0 1.700l-5 5.200Z" fill="#9f97fa"/></svg><span class="t" style="left:684.11px;top:1007px;font-size:12.5px;color:#242424;">Log-in</span><span class="t" style="left:888.38px;top:1007px;font-size:12.5px;transform:scaleX(0.8910);color:#242424;">3 sessions</span><svg class="i" style="left:964.3px;top:1010px;width:14.6px;height:11.4px;color:#0078d4;"><use href="#cam"/></svg><svg class="i" style="left:1006px;top:1007.2px;width:10.7px;height:14.4px;color:#0078d4;"><use href="#flame"/></svg><div class="sep" style="left:641px;top:1046px;width:395px"></div><div class="circ" style="left:649px;top:1062.8px;width:28px;height:28px;background:#e8e6fd"></div><svg class="i" style="left:656px;top:1070.3px;width:14px;height:14px" viewBox="0 0 15 16" preserveAspectRatio="none"><circle cx="6" cy="3.600" r="3.600" fill="#9f97fa"/><path d="M2.400 9h7.200c.5 0 1 .2 1.400.5-2 .6-3.300 2.300-3.300 4.400 0 .7.100 1.300.4 1.900C3.500 16 0 14.600 0 11.400 0 10 1 9 2.400 9Z" fill="#9f97fa"/><circle cx="11.300" cy="12.300" r="3.600" fill="#9f97fa"/><path d="M11.300 10.400v3.800M9.400 12.300h3.800" stroke="#fff" stroke-width="1" stroke-linecap="round"/></svg><span class="t" style="left:684.07px;top:1068px;font-size:12.5px;transform:scaleX(0.9570);color:#242424;">Sign up</span><span class="t" style="left:887.87px;top:1068px;font-size:12.5px;transform:scaleX(0.9030);color:#242424;">1 sessions</span><svg class="i" style="left:964.3px;top:1071px;width:14.6px;height:11.4px;color:#0078d4;"><use href="#cam"/></svg><svg class="i" style="left:1006px;top:1068.2px;width:10.7px;height:14.4px;color:#0078d4;"><use href="#flame"/></svg></section><section style="left:0;top:0"><div class="shw"><div class="cardb" style="left:1084px;top:834px;width:443px;height:466px"></div><div class="tab" style="left:1084px;top:794px;width:182px;height:40px"></div><div class="tabi" style="left:1270px;top:794px;width:139px;height:40px"></div></div><svg class="i" style="left:1093px;top:810px;width:6px;height:10px;"><use href="#drag"/></svg><span class="t" style="left:1107.35px;top:805px;font-size:14.5px;transform:scaleX(0.9850);color:#242424;-webkit-text-stroke:0.45px #242424;">Performance overview</span><span class="t" style="left:1284.78px;top:805px;font-size:14.5px;transform:scaleX(0.9540);color:#242424;">URL performance</span><svg class="i" style="left:1484.1px;top:851.6px;width:15px;height:3px;"><use href="#more"/></svg><div class="bx" style="left:1116px;top:882px;width:379px;height:60px;border-color:#d9e6f7;"></div><span class="t" style="left:1132.60px;top:904px;font-size:29px;transform:scaleX(0.9080);color:#023c72;-webkit-text-stroke:0.6px #023c72;">91/100</span><span class="t" style="left:1233.31px;top:895px;font-size:14.5px;transform:scaleX(0.9680);color:#242424;-webkit-text-stroke:0.45px #242424;">Performance score</span><svg class="i" style="left:1360px;top:899px;width:12.2px;height:12.2px;"><use href="#info"/></svg><span class="t" style="left:1233.47px;top:916px;font-size:12.5px;transform:scaleX(0.9240);color:#242424;font-style:italic;">from 8,749 pageviews</span><div style="left:1116px;top:954px;width:315px;height:20px;background:#048a04;border-radius:3px 0 0 3px"></div><div style="left:1433px;top:954px;width:58.200px;height:20px;background:#ffaa44"></div><div style="left:1493.200px;top:954px;width:1.800px;height:20px;background:#c50f1f;border-radius:0 3px 3px 0"></div><div class="dot" style="left:1117px;top:990px;width:10px;height:10px;background:#048a04"></div><span class="t" style="left:1133.32px;top:985px;font-size:12.5px;transform:scaleX(0.9540);color:#505050;">84.0% good</span><div class="dot" style="left:1210px;top:990px;width:10px;height:10px;background:#ffaa44"></div><span class="t" style="left:1226.81px;top:985px;font-size:12.5px;transform:scaleX(0.9470);color:#505050;">15.7% needs improvement</span><svg class="i" style="left:1381.600px;top:988.500px;width:12.500px;height:11.500px" viewBox="0 0 12.500 11.500"><path d="M5.400.5c.4-.7 1.300-.7 1.700 0l5.200 9.400c.4.700-.1 1.600-.9 1.600H1.100c-.8 0-1.300-.9-.9-1.600Z" fill="#c50f1f"/><rect x="5.600" y="3.400" width="1.300" height="4.200" rx=".6" fill="#fff"/><circle cx="6.250" cy="9.200" r=".8" fill="#fff"/></svg><span class="t" style="left:1401.78px;top:985px;font-size:12.5px;transform:scaleX(0.9430);color:#505050;">0.3% poor</span><span class="t" style="left:1115.40px;top:1018px;font-size:14.5px;transform:scaleX(0.9500);color:#242424;">Performance score breakdown</span><div class="bx" style="left:1116px;top:1046px;width:379px;height:60px;border-color:#d9e6f7;"></div><span class="t" style="left:1132.56px;top:1068px;font-size:29px;transform:scaleX(0.9260);color:#023c72;-webkit-text-stroke:0.6px #023c72;">2.6</span><span class="t" style="left:1171.28px;top:1073px;font-size:14.5px;transform:scaleX(0.7680);color:#023c72;-webkit-text-stroke:0.3px #023c72;">s</span><span class="t" style="left:1216.64px;top:1059px;font-size:14.5px;transform:scaleX(0.9640);color:#242424;-webkit-text-stroke:0.4px #242424;">Largest Contentful Paint (LCP)</span><div class="dot" style="left:1218px;top:1085px;width:10px;height:10px;background:#ffaa44"></div><span class="t" style="left:1234.76px;top:1080px;font-size:12.5px;transform:scaleX(0.9200);color:#242424;font-style:italic;">needs improvement</span><svg class="i" style="left:1426.3px;top:1070px;width:14.6px;height:11.4px;color:#0078d4;"><use href="#cam"/></svg><svg class="i" style="left:1460px;top:1067.2px;width:10.7px;height:14.4px;color:#0078d4;"><use href="#flame"/></svg><div class="bx" style="left:1116px;top:1114px;width:379px;height:60px;border-color:#d9e6f7;"></div><span class="t" style="left:1133.05px;top:1136px;font-size:29px;transform:scaleX(0.9080);color:#023c72;-webkit-text-stroke:0.6px #023c72;">4</span><span class="t" style="left:1148.17px;top:1141px;font-size:14.5px;transform:scaleX(0.9790);color:#023c72;-webkit-text-stroke:0.3px #023c72;">ms</span><span class="t" style="left:1216.55px;top:1127px;font-size:14.5px;transform:scaleX(0.9750);color:#242424;-webkit-text-stroke:0.4px #242424;">First Input Delay (FID)</span><div class="dot" style="left:1218px;top:1153px;width:10px;height:10px;background:#048a04"></div><span class="t" style="left:1234.96px;top:1148px;font-size:12.5px;transform:scaleX(0.8830);color:#242424;font-style:italic;">good</span><svg class="i" style="left:1426.3px;top:1138px;width:14.6px;height:11.4px;color:#0078d4;"><use href="#cam"/></svg><svg class="i" style="left:1460px;top:1135.2px;width:10.7px;height:14.4px;color:#0078d4;"><use href="#flame"/></svg><div class="bx" style="left:1116px;top:1182px;width:379px;height:60px;border-color:#d9e6f7;"></div><span class="t" style="left:1133.49px;top:1204px;font-size:29px;transform:scaleX(0.8580);color:#023c72;-webkit-text-stroke:0.6px #023c72;">0.14</span><span class="t" style="left:1217.48px;top:1195px;font-size:14.5px;transform:scaleX(0.9620);color:#242424;-webkit-text-stroke:0.4px #242424;">Cumulative Layout Shift (CLS)</span><div class="dot" style="left:1218px;top:1221px;width:10px;height:10px;background:#ffaa44"></div><span class="t" style="left:1234.76px;top:1216px;font-size:12.5px;transform:scaleX(0.9200);color:#242424;font-style:italic;">needs improvement</span><svg class="i" style="left:1426.3px;top:1206px;width:14.6px;height:11.4px;color:#0078d4;"><use href="#cam"/></svg><svg class="i" style="left:1460px;top:1203.2px;width:10.7px;height:14.4px;color:#0078d4;"><use href="#flame"/></svg><a class="t" style="left:1115.38px;top:1254px;font-size:14.5px;transform:scaleX(0.9730);color:#0f6cbd;">Learn how to improve your performance</a></section>
</body></html>
